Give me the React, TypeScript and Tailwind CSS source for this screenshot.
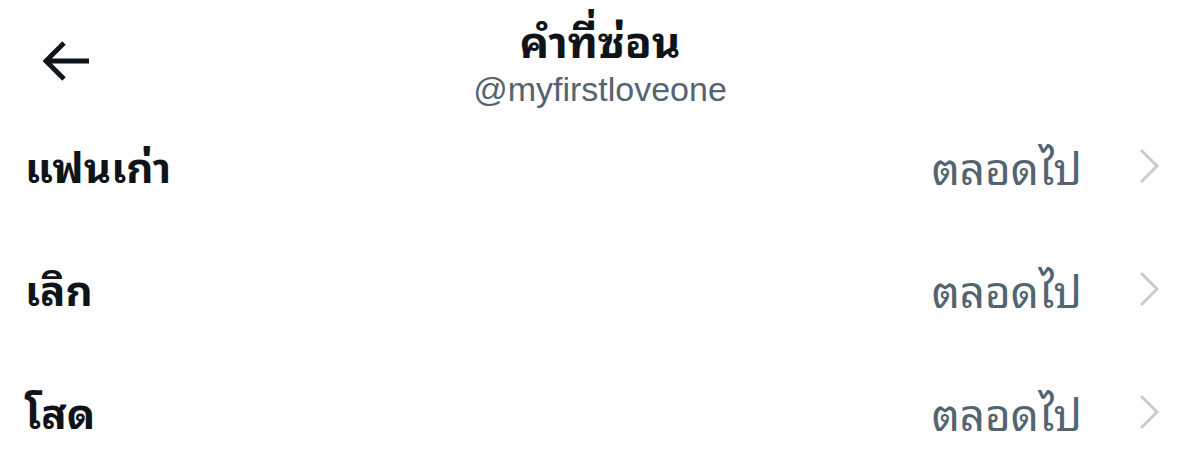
import React from "react";

const rows = [
  { label: "แฟนเก่า", value: "ตลอดไป" },
  { label: "เลิก", value: "ตลอดไป" },
  { label: "โสด", value: "ตลอดไป" },
];

function BackArrow() {
  return (
    <svg width="48" height="42" viewBox="0 0 48 42" fill="none">
      <path d="M46 21H4M21 3L3 21l18 18" stroke="#0f1419" strokeWidth="4.8" strokeLinecap="butt" strokeLinejoin="miter" />
    </svg>
  );
}

function Chevron() {
  return (
    <svg width="22" height="36" viewBox="0 0 22 36" fill="none">
      <path d="M3 2l16 16L3 34" stroke="#c5cdd3" strokeWidth="3" />
    </svg>
  );
}

export default function App() {
  const font = { fontFamily: '"Noto Sans Thai Looped", "Noto Sans Thai", "Noto Sans", Roboto, sans-serif' };
  return (
    <div className="w-[1200px] h-[471px] overflow-hidden bg-white" style={font}>
      <div className="grid grid-cols-[200px_1fr_200px] h-[103px]">
        <div className="flex items-start pl-[43px] pt-[40px]">
          <BackArrow />
        </div>
        <div className="flex flex-col items-center pt-[8px]">
          <div className="text-[44px] leading-[60px] font-bold text-[#0f1419]">คำที่ซ่อน</div>
          <div className="text-[34px] leading-[38px] mt-[2px] text-[#536471] font-['Liberation_Sans',sans-serif]">@myfirstloveone</div>
        </div>
        <div />
      </div>
      {rows.map((r) => (
        <div key={r.label} className="flex items-center h-[123px] pl-[25px] pr-[40px]">
          <div className="flex-1 text-[42px] font-bold text-[#0f1419]">{r.label}</div>
          <div className="text-[44px] font-normal text-[#536471] mr-[56px]">{r.value}</div>
          <div className="pt-[2px]"><Chevron /></div>
        </div>
      ))}
    </div>
  );
}
